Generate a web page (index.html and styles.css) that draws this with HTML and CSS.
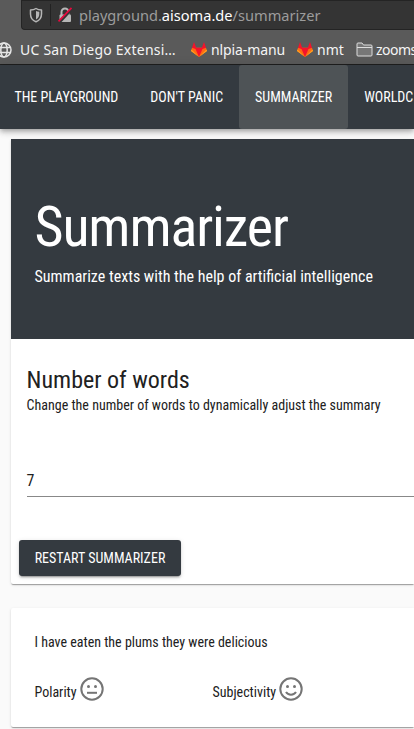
FILE: index.html
```html
<!DOCTYPE html>
<html lang="en">
<head>
<meta charset="utf-8">
<title>Summarizer</title>
<link rel="stylesheet" href="styles.css">
</head>
<body>
<svg class="defs" width="0" height="0" aria-hidden="true">
  <symbol id="fox" viewBox="0 0 16 15">
    <path fill="#ff6a13" d="M0 9 1 5.800h14L16 9l-8 6z"/>
    <path fill="#f5132b" d="M3 0 5.200 5.800h5.600L13 0 15 5.800 11.500 7 8 15 4.500 7 1 5.800z"/>
    <path fill="#ffa51f" d="M.5 7.500 0 9l8 6-4.500-4.500zM15.500 7.500 16 9l-8 6 4.500-4.500z"/>
  </symbol>
</svg>
<header class="browser">
  <div class="address">
    <svg class="shield" viewBox="0 0 14 16"><path d="M7 1.500C5.500 2.500 3.500 3 1.500 3v4c0 3.500 2 6.500 5.500 7.700C10.500 13.500 12.500 10.500 12.500 7V3c-2 0-4-.5-5.500-1.500z" fill="none" stroke="#b6b6b6" stroke-width="1.500" stroke-linejoin="round"/><path d="M7 4v8.400c2.200-1 3.300-3 3.300-5.400V4.800C9 4.800 8 4.500 7 4z" fill="#b6b6b6"/></svg>
    <span class="divider"></span>
    <svg class="lock" viewBox="0 0 16 16"><path d="M4.500 8V5a3.500 3.500 0 0 1 7 0v3" fill="none" stroke="#b6b6b6" stroke-width="2"/><rect x="2.500" y="7.500" width="11.500" height="7.500" rx="1" fill="#b6b6b6"/><path d="M2.500 15 15 1.500" stroke="#343434" stroke-width="3"/><path d="M1.500 14.300 14.500 .8" stroke="#e8093e" stroke-width="1.700"/></svg>
    <span class="url">playground.<b>aisoma.de</b>/summarizer</span>
  </div>
  <div class="bookmarks">
    <svg class="globe" viewBox="0 0 16 16" fill="none" stroke="#e5e5e5" stroke-width="1.500"><circle cx="8" cy="8" r="7"/><ellipse cx="8" cy="8" rx="3.200" ry="7"/><path d="M1.500 5.500h13M1.500 10.500h13"/></svg>
    <span class="mark m-uc">UC San Diego Extensi…</span>
    <svg class="fox"><use href="#fox"/></svg>
    <span class="mark m-nlpia">nlpia-manu</span>
    <svg class="fox"><use href="#fox"/></svg>
    <span class="mark m-nmt">nmt</span>
    <svg class="folder" viewBox="0 0 17 15"><path d="M1 13V2q0-1 1-1h4l1.500 2H15q1 0 1 1v9q0 1-1 1H2q-1 0-1-1zM1 5.500h15" fill="#777" stroke="#ddd"/></svg>
    <span class="mark m-zoom">zooms</span>
  </div>
</header>
<nav class="nav">
  <a class="tab">THE PLAYGROUND</a>
  <a class="tab">DON'T PANIC</a>
  <a class="tab active">SUMMARIZER</a>
  <a class="tab">WORLDC</a>
</nav>
<main class="page">
  <section class="card">
    <div class="hero">
      <h1>Summarizer</h1>
      <p>Summarize texts with the help of artificial intelligence</p>
    </div>
    <div class="body">
      <h2>Number of words</h2>
      <p class="hint">Change the number of words to dynamically adjust the summary</p>
      <div class="field">7</div>
    </div>
    <div class="actions"><button class="restart">RESTART SUMMARIZER</button></div>
  </section>
  <section class="card result">
    <p>I have eaten the plums they were delicious</p>
    <div class="scores">
      <div class="score">Polarity <svg class="face" viewBox="0 0 24 24"><circle cx="12" cy="12" r="10.700"/><path d="M7 15.800h10"/><circle class="eye" cx="8.500" cy="9.500" r="1.500"/><circle class="eye" cx="15.500" cy="9.500" r="1.500"/></svg></div>
      <div class="score">Subjectivity <svg class="face" viewBox="0 0 24 24"><circle cx="12" cy="12" r="10.700"/><path d="M7 15c2 3.500 8 3.500 10 0"/><circle class="eye" cx="8.500" cy="9.500" r="1.500"/><circle class="eye" cx="15.500" cy="9.500" r="1.500"/></svg></div>
    </div>
  </section>
</main>
</body>
</html>
```
FILE: styles.css
```css
* { box-sizing: border-box; }
html { overflow: hidden; background: #fafafa; }
body {
  margin: 0;
  height: 729px;
  overflow: hidden;
  font: 14px/20px "Roboto Condensed", Roboto, sans-serif;
  font-stretch: 75%;
  color: #212121;
  white-space: nowrap;
}
h1, h2, p { margin: 0; font-weight: 400; }
.defs { position: absolute; }
.browser {
  height: 65px;
  background: #5a5a5a;
  border-bottom: 1px solid #202020;
  font-family: "Noto Sans", sans-serif;
  font-stretch: normal;
}
.address {
  display: flex;
  align-items: center;
  height: 30px;
  margin-left: 21px;
  background: #343434;
  border: 1px solid #242424;
  border-right: 0;
  border-radius: 0 0 0 4px;
}
.shield { width: 14px; height: 16px; margin-left: 7px; }
.divider { width: 1px; height: 22px; margin: 0 6px 0 7px; background: #222; }
.lock { width: 16px; height: 16px; }
.url { margin-left: 6px; font-size: 14.600px; color: #9c9c9c; }
.url b { font-weight: 400; color: #fff; }
.bookmarks { display: flex; align-items: center; height: 39px; color: #f4f4f4; }
.bookmarks svg { flex: none; }
.globe { width: 16px; height: 16px; margin-left: -4px; }
.mark { flex: none; margin-left: 4px; font-size: 14px; }
.m-uc { width: 157px; margin-left: 8px; letter-spacing: .22px; }
.m-nlpia { width: 74px; letter-spacing: -.1px; }
.m-nmt { width: 27px; }
.m-zoom { margin-left: 3px; letter-spacing: -.5px; }
.fox { width: 16px; height: 15px; margin-left: 14px; }
.m-nlpia + .fox { margin-left: 12px; }
.folder { width: 17px; height: 15px; margin-left: 12px; }
.nav {
  display: flex;
  position: relative;
  height: 64px;
  background: #343a40;
  box-shadow: 0 2px 4px -1px rgba(0,0,0,.2), 0 4px 5px rgba(0,0,0,.14), 0 1px 10px rgba(0,0,0,.12);
}
.tab { flex: none; padding: 0 16px; line-height: 64px; color: #fff; border-radius: 3px; }
.tab:first-child { padding-left: 14.400px; }
.tab:last-child { padding-right: 0; }
.active { background: #4e5356; }
.page { padding: 10px 0 0 11px; }
.card {
  background: #fff;
  border-radius: 2px 0 0 2px;
  box-shadow: 0 2px 1px -1px rgba(0,0,0,.2), 0 1px 1px rgba(0,0,0,.14), 0 1px 3px rgba(0,0,0,.12);
}
.hero { height: 200px; padding: 56px 23.500px 0; background: #343a40; color: #fff; }
.hero h1 { font-size: 56px; line-height: 64px; letter-spacing: -1.120px; }
.hero p { margin-top: 6px; font-size: 16px; line-height: 24px; }
.body { padding: 25px 0 0 15.600px; }
.body h2 { font-size: 24px; line-height: 32px; }
.hint { line-height: 18px; }
.field {
  margin-top: 51px;
  height: 32px;
  line-height: 32px;
  font-size: 16px;
  border-bottom: 1px solid #888;
}
.actions { padding: 43px 8px 8px; }
.restart {
  display: block;
  width: 162px;
  height: 36px;
  padding: 0;
  border: 0;
  border-radius: 3px;
  background: #343a40;
  color: #fff;
  font: inherit;
  font-stretch: 75%;
  box-shadow: 0 3px 1px -2px rgba(0,0,0,.2), 0 2px 2px rgba(0,0,0,.14), 0 1px 5px rgba(0,0,0,.12);
}
.result { height: 119px; margin-top: 24px; padding: 24px 23.500px; }
.scores { display: grid; grid-template-columns: 178px 178px; margin-top: 24px; }
.score { display: flex; gap: 3px; line-height: 32px; }
.face { width: 24px; height: 24px; margin-top: 1px; fill: none; stroke: #757575; stroke-width: 2; }
.face .eye { fill: #757575; stroke: none; }
```
